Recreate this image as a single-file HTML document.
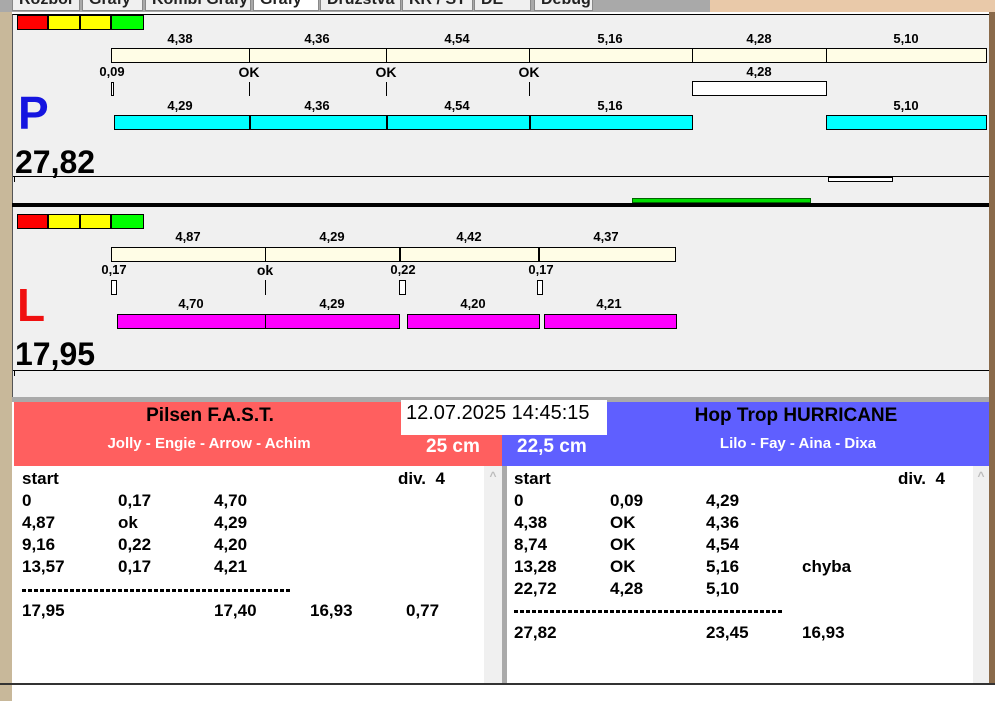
<!DOCTYPE html>
<html><head><meta charset="utf-8"><style>
*{margin:0;padding:0;box-sizing:border-box}
body{width:995px;height:701px;position:relative;overflow:hidden;background:#fff;font-family:"Liberation Sans",Arial,sans-serif;font-weight:bold;color:#000}
div{position:absolute}
.t{font-size:13px;transform:translateX(-50%);white-space:nowrap;line-height:14px}
.tab{top:-10px;height:21px;background:#f0f0f0;border:1px solid #888;font-size:16px;line-height:17px;padding-left:6px;overflow:hidden;color:#222}
.l{font-size:17px;line-height:22px;white-space:nowrap}
</style></head><body>
<div style="left:0;top:0;width:12px;height:701px;background:#c8b89a"></div>
<div style="left:0;top:0;width:995px;height:12px;background:#a9a9a9"></div>
<div style="left:710px;top:0;width:285px;height:12px;background:#e9c9a9"></div>
<div style="left:989px;top:12px;width:6px;height:671px;background:#8a6a4a"></div>
<div class="tab" style="left:12px;width:68px">Rozbor</div>
<div class="tab" style="left:82px;width:61px">Grafy</div>
<div class="tab" style="left:145px;width:106px">Kombi Grafy</div>
<div class="tab" style="left:253px;width:66px;background:#fff">Grafy</div>
<div class="tab" style="left:320px;width:81px">Družstva</div>
<div class="tab" style="left:402px;width:71px">KR / ST</div>
<div class="tab" style="left:474px;width:57px">DE</div>
<div class="tab" style="left:534px;width:59px">Debug</div>
<div style="left:12px;top:14px;width:977px;height:386px;background:#f0f0f0;border-top:1px solid #000;border-left:1px solid #555"></div>
<!-- P section -->
<div style="left:17px;top:15px;width:31px;height:15px;background:#f00;border:1px solid #000"></div>
<div style="left:48px;top:15px;width:32px;height:15px;background:#ff0;border:1px solid #000"></div>
<div style="left:80px;top:15px;width:31px;height:15px;background:#ff0;border:1px solid #000"></div>
<div style="left:111px;top:15px;width:33px;height:15px;background:#0f0;border:1px solid #000"></div>
<div style="left:111px;top:48px;width:876px;height:15px;background:#fffde6;border:1px solid #000"></div>
<div style="left:249px;top:48px;width:1px;height:15px;background:#000"></div>
<div style="left:386px;top:48px;width:1px;height:15px;background:#000"></div>
<div style="left:529px;top:48px;width:1px;height:15px;background:#000"></div>
<div style="left:692px;top:48px;width:1px;height:15px;background:#000"></div>
<div style="left:826px;top:48px;width:1px;height:15px;background:#000"></div>
<div class="t" style="left:180px;top:32px">4,38</div>
<div class="t" style="left:317px;top:32px">4,36</div>
<div class="t" style="left:457px;top:32px">4,54</div>
<div class="t" style="left:610px;top:32px">5,16</div>
<div class="t" style="left:759px;top:32px">4,28</div>
<div class="t" style="left:906px;top:32px">5,10</div>
<div class="t" style="left:112px;top:65px">0,09</div>
<div class="t" style="left:249px;top:65px;font-size:14px">OK</div>
<div class="t" style="left:386px;top:65px;font-size:14px">OK</div>
<div class="t" style="left:529px;top:65px;font-size:14px">OK</div>
<div class="t" style="left:759px;top:65px">4,28</div>
<div style="left:111px;top:82px;width:3px;height:14px;border:1px solid #000;background:#fff"></div>
<div style="left:249px;top:82px;width:1px;height:14px;background:#000"></div>
<div style="left:386px;top:82px;width:1px;height:14px;background:#000"></div>
<div style="left:529px;top:82px;width:1px;height:14px;background:#000"></div>
<div style="left:692px;top:81px;width:135px;height:15px;background:#fff;border:1px solid #000"></div>
<div style="left:18px;top:88px;font-size:46px;color:#1515e0;line-height:50px">P</div>
<div class="t" style="left:180px;top:99px">4,29</div>
<div class="t" style="left:317px;top:99px">4,36</div>
<div class="t" style="left:457px;top:99px">4,54</div>
<div class="t" style="left:610px;top:99px">5,16</div>
<div class="t" style="left:906px;top:99px">5,10</div>
<div style="left:114px;top:115px;width:579px;height:15px;background:#0ff;border:1px solid #000"></div>
<div style="left:249px;top:115px;width:2px;height:15px;background:#000"></div>
<div style="left:386px;top:115px;width:2px;height:15px;background:#000"></div>
<div style="left:529px;top:115px;width:2px;height:15px;background:#000"></div>
<div style="left:826px;top:115px;width:161px;height:15px;background:#0ff;border:1px solid #000"></div>
<div style="left:15px;top:145px;font-size:32px;line-height:34px">27,82</div>
<div style="left:13px;top:176px;width:976px;height:1px;background:#000"></div>
<div style="left:14px;top:177px;width:1px;height:5px;background:#000"></div>
<div style="left:828px;top:177px;width:65px;height:5px;background:#fff;border:1px solid #000"></div>
<div style="left:632px;top:198px;width:179px;height:5px;background:#0d0;border:1px solid #060"></div>
<div style="left:12px;top:203px;width:977px;height:4px;background:#000"></div>
<!-- L section -->
<div style="left:17px;top:214px;width:31px;height:15px;background:#f00;border:1px solid #000"></div>
<div style="left:48px;top:214px;width:32px;height:15px;background:#ff0;border:1px solid #000"></div>
<div style="left:80px;top:214px;width:31px;height:15px;background:#ff0;border:1px solid #000"></div>
<div style="left:111px;top:214px;width:33px;height:15px;background:#0f0;border:1px solid #000"></div>
<div class="t" style="left:188px;top:230px">4,87</div>
<div class="t" style="left:332px;top:230px">4,29</div>
<div class="t" style="left:469px;top:230px">4,42</div>
<div class="t" style="left:606px;top:230px">4,37</div>
<div style="left:111px;top:247px;width:565px;height:15px;background:#fffde6;border:1px solid #000"></div>
<div style="left:265px;top:247px;width:1px;height:15px;background:#000"></div>
<div style="left:399px;top:247px;width:2px;height:15px;background:#000"></div>
<div style="left:538px;top:247px;width:2px;height:15px;background:#000"></div>
<div class="t" style="left:114px;top:263px">0,17</div>
<div class="t" style="left:265px;top:263px;font-size:14px">ok</div>
<div class="t" style="left:403px;top:263px">0,22</div>
<div class="t" style="left:541px;top:263px">0,17</div>
<div style="left:111px;top:280px;width:6px;height:15px;background:#fff;border:1px solid #000"></div>
<div style="left:265px;top:280px;width:1px;height:15px;background:#000"></div>
<div style="left:399px;top:280px;width:7px;height:15px;background:#fff;border:1px solid #000"></div>
<div style="left:537px;top:280px;width:6px;height:15px;background:#fff;border:1px solid #000"></div>
<div style="left:17px;top:280px;font-size:46px;color:#f01010;line-height:50px">L</div>
<div class="t" style="left:191px;top:297px">4,70</div>
<div class="t" style="left:332px;top:297px">4,29</div>
<div class="t" style="left:473px;top:297px">4,20</div>
<div class="t" style="left:609px;top:297px">4,21</div>
<div style="left:117px;top:314px;width:283px;height:15px;background:#f0f;border:1px solid #000"></div>
<div style="left:265px;top:314px;width:1px;height:15px;background:#000"></div>
<div style="left:407px;top:314px;width:133px;height:15px;background:#f0f;border:1px solid #000"></div>
<div style="left:544px;top:314px;width:133px;height:15px;background:#f0f;border:1px solid #000"></div>
<div style="left:15px;top:337px;font-size:32px;line-height:34px">17,95</div>
<div style="left:13px;top:370px;width:976px;height:1px;background:#000"></div>
<div style="left:14px;top:371px;width:1px;height:5px;background:#000"></div>
<div style="left:12px;top:397px;width:977px;height:5px;background:#aaa"></div>
<!-- bottom headers -->
<div style="left:14px;top:402px;width:488px;height:64px;background:#ff5f5f"></div>
<div style="left:502px;top:402px;width:487px;height:64px;background:#5f5fff"></div>
<div style="left:401px;top:400px;width:206px;height:35px;background:#fff"></div>
<div style="left:406px;top:401px;font-size:20px;font-weight:normal;line-height:24px">12.07.2025 14:45:15</div>
<div class="t" style="left:210px;top:405px;font-size:19px;line-height:22px">Pilsen F.A.S.T.</div>
<div class="t" style="left:796px;top:405px;font-size:19px;line-height:22px">Hop Trop HURRICANE</div>
<div class="t" style="left:209px;top:435px;font-size:15px;line-height:18px;color:#fff">Jolly - Engie - Arrow - Achim</div>
<div class="t" style="left:798px;top:435px;font-size:15px;line-height:18px;color:#fff">Lilo - Fay - Aina - Dixa</div>
<div style="left:426px;top:436px;font-size:19px;line-height:22px;color:#fff">25 cm</div>
<div style="left:517px;top:436px;font-size:19px;line-height:22px;color:#fff">22,5 cm</div>
<!-- lists -->
<div style="left:14px;top:466px;width:470px;height:217px;background:#fff"></div>
<div style="left:484px;top:466px;width:18px;height:217px;background:#f0f0f0;color:#bbb;font-size:12px;text-align:center;line-height:20px">^</div>
<div style="left:502px;top:466px;width:5px;height:217px;background:#aaa"></div>
<div style="left:507px;top:466px;width:466px;height:217px;background:#fff"></div>
<div style="left:973px;top:466px;width:16px;height:217px;background:#f0f0f0;color:#bbb;font-size:12px;text-align:center;line-height:20px">^</div>
<div style="left:0;top:683px;width:995px;height:2px;background:#333"></div>
<div class="l" style="left:22px;top:468px">start<br>0<br>4,87<br>9,16<br>13,57<br><br>17,95</div>
<div class="l" style="left:118px;top:490px">0,17<br>ok<br>0,22<br>0,17</div>
<div class="l" style="left:214px;top:490px">4,70<br>4,29<br>4,20<br>4,21<br><br>17,40</div>
<div class="l" style="left:310px;top:600px">16,93</div>
<div class="l" style="left:406px;top:600px">0,77</div>
<div class="l" style="left:398px;top:468px">div.&nbsp; 4</div>
<div style="left:22px;top:589px;width:270px;height:3px;background:repeating-linear-gradient(90deg,#000 0 4px,transparent 4px 6px)"></div>
<div class="l" style="left:514px;top:468px">start<br>0<br>4,38<br>8,74<br>13,28<br>22,72<br><br>27,82</div>
<div class="l" style="left:610px;top:490px">0,09<br>OK<br>OK<br>OK<br>4,28</div>
<div class="l" style="left:706px;top:490px">4,29<br>4,36<br>4,54<br>5,16<br>5,10<br><br>23,45</div>
<div class="l" style="left:802px;top:556px">chyba</div>
<div class="l" style="left:802px;top:622px">16,93</div>
<div class="l" style="left:898px;top:468px">div.&nbsp; 4</div>
<div style="left:514px;top:610px;width:270px;height:3px;background:repeating-linear-gradient(90deg,#000 0 4px,transparent 4px 6px)"></div>
</body></html>
